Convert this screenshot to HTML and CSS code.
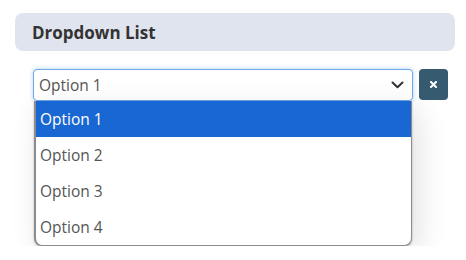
FILE: index.html
```html
<!DOCTYPE html>
<html>
<head>
<meta charset="utf-8">
<link rel="stylesheet" href="styles.css">
</head>
<body>
<div class="page">
  <div class="header">Dropdown List</div>
  <div class="row">
    <div class="select-wrap">
      <div class="select">
        <span class="value">Option 1</span>
        <svg class="chev" width="13" height="8" viewBox="0 0 13 8"><path d="M1.5 1.5 L6.5 6.2 L11.5 1.5" fill="none" stroke="#333" stroke-width="2" stroke-linecap="round" stroke-linejoin="round"/></svg>
      </div>
      <div class="list">
        <div class="item active">Option 1</div>
        <div class="item">Option 2</div>
        <div class="item">Option 3</div>
        <div class="item">Option 4</div>
      </div>
    </div>
    <div class="clear"><svg width="7" height="7" viewBox="0 0 7 7"><path d="M1 1 L6 6 M6 1 L1 6" stroke="#fff" stroke-width="2" stroke-linecap="square"/></svg></div>
  </div>
</div>
</body>
</html>
```
FILE: styles.css
```css
html, body { margin: 0; padding: 0; background: #fff; }
body { font-family: "Open Sans", "Noto Sans", sans-serif; }
.page { padding: 13px 11px 0 15px; }
.header {
  width: 423px;
  height: 38px;
  padding-left: 17px;
  background: #dfe4ee;
  border-radius: 8px;
  display: flex;
  align-items: center;
  font-weight: 700;
  font-size: 17px;
  color: #333;
}
.row {
  display: flex;
  align-items: flex-start;
  gap: 6px;
  margin-top: 18px;
  padding-left: 18px;
}
.select-wrap {
  display: flex;
  flex-direction: column;
  width: 380px;
}
.select {
  box-sizing: border-box;
  width: 380px;
  height: 32px;
  border: 1px solid #6ea9e8;
  border-radius: 4px;
  box-shadow: 0 0 4px rgba(80, 150, 230, 0.45);
  display: flex;
  align-items: center;
  justify-content: space-between;
  padding: 0 8px 0 5px;
  font-size: 15.5px;
  color: #555;
  background: #fff;
}
.chev { display: block; }
.list {
  box-sizing: border-box;
  width: 378px;
  margin-left: 1px;
  background: #fff;
  border: 1px solid #8c8c8c;
  border-top: none;
  border-left-width: 2px;
  border-radius: 0 0 8px 8px;
  box-shadow: 0 1px 2px rgba(0,0,0,0.3), 6px 8px 30px rgba(0,0,0,0.12);
  overflow: hidden;
}
.item {
  height: 36px;
  display: flex;
  align-items: center;
  padding-left: 4px;
  font-size: 15.5px;
  color: #555;
}
.item.active { background: #1967d2; color: #fff; }
.clear {
  box-sizing: border-box;
  width: 29px;
  height: 31px;
  border-radius: 4px;
  background: #365a70;
  display: flex;
  align-items: center;
  justify-content: center;
}
```
